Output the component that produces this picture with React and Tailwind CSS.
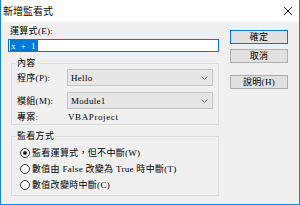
const Chevron = () => (
    <svg width="7" height="4" viewBox="0 0 7 4" className="shrink-0">
        <path d="M0.5 0.5 L3.5 3.5 L6.5 0.5" fill="none" stroke="#606060" strokeWidth="1" />
    </svg>
);

const Combo = ({ value }) => (
    <div className="h-[17px] w-[146px] bg-[#e6e6e6] border border-[#c4c4c4] flex items-center justify-between pl-[3px] pr-[4px]">
        <span>{value}</span>
        <Chevron />
    </div>
);

const Radio = ({ checked, label }) => (
    <div className="h-[16px] flex items-center pl-[8px] gap-[2px]">
        <span className="w-[10px] h-[10px] rounded-full border border-[#333] bg-white flex items-center justify-center shrink-0">
            {checked && <span className="w-[4px] h-[4px] rounded-full bg-[#222]" />}
        </span>
        <span className="whitespace-nowrap">{label}</span>
    </div>
);

const Button = ({ label, focused }) => (
    <div
        className={
            focused
                ? "h-[14px] w-[58px] bg-[#e1e1e1] border border-[#0078d7] flex items-center justify-center"
                : "h-[14px] w-[58px] bg-[#e1e1e1] border border-[#adadad] flex items-center justify-center"
        }
    >
        {label}
    </div>
);

export default function App() {
    return (
        <div
            className="w-[300px] h-[205px] bg-[#f0f0f0] border-x border-b border-[#1883d7] flex flex-col text-[9px] leading-[12px] tracking-[0.3px] text-black"
            style={{ fontFamily: '"Liberation Serif", "Noto Sans CJK TC", serif' }}
        >
            {/* title bar */}
            <div className="h-[22px] bg-white flex items-center justify-between pl-[2px] pr-[7px] shrink-0">
                <span className="text-[10px] tracking-normal" style={{ fontFamily: '"Noto Sans CJK TC", sans-serif' }}>
                    新增監看式
                </span>
                <svg width="8" height="8" viewBox="0 0 8 8">
                    <path d="M0 0 L8 8 M8 0 L0 8" stroke="#111" strokeWidth="1" />
                </svg>
            </div>

            <div className="flex pl-[7px]">
                {/* left column */}
                <div className="w-[211px] flex flex-col">
                    <div className="mt-[3px] h-[12px] pl-[2px]">運算式(E):</div>
                    <div className="mt-[2px] h-[13px] bg-white border border-[#0078d7] flex items-center pl-[1px]">
                        <span className="bg-[#0078d7] text-white px-[1px] tracking-[1.5px]">x + 1</span>
                    </div>

                    <fieldset className="mt-[5px] ml-[3px] w-[208px] border border-[#dcdcdc] pb-[1px]">
                        <legend className="ml-[4px] px-[1px] h-[12px]">內容</legend>
                        <div className="flex items-center">
                            <span className="w-[55px] pl-[5px]">程序(P):</span>
                            <Combo value="Hello" />
                        </div>
                        <div className="flex items-center mt-[6px]">
                            <span className="w-[55px] pl-[5px]">模組(M):</span>
                            <Combo value="Module1" />
                        </div>
                        <div className="flex items-center mt-[2px] h-[12px]">
                            <span className="w-[55px] pl-[5px]">專案:</span>
                            <span className="pl-[1px] tracking-[0.6px]">VBAProject</span>
                        </div>
                    </fieldset>

                    <fieldset className="mt-[5px] ml-[3px] w-[208px] border border-[#dcdcdc] pb-[2px]">
                        <legend className="ml-[4px] px-[1px] h-[12px]">監看方式</legend>
                        <div className="mt-[3px]">
                            <Radio checked label="監看運算式，但不中斷(W)" />
                            <Radio label="數值由 False 改變為 True 時中斷(T)" />
                            <Radio label="數值改變時中斷(C)" />
                        </div>
                    </fieldset>
                </div>

                {/* right column */}
                <div className="ml-[11px] pt-[8px] flex flex-col">
                    <Button label="確定" focused />
                    <div className="mt-[5px]">
                        <Button label="取消" />
                    </div>
                    <div className="mt-[12px]">
                        <Button label="說明(H)" />
                    </div>
                </div>
            </div>
        </div>
    );
}
